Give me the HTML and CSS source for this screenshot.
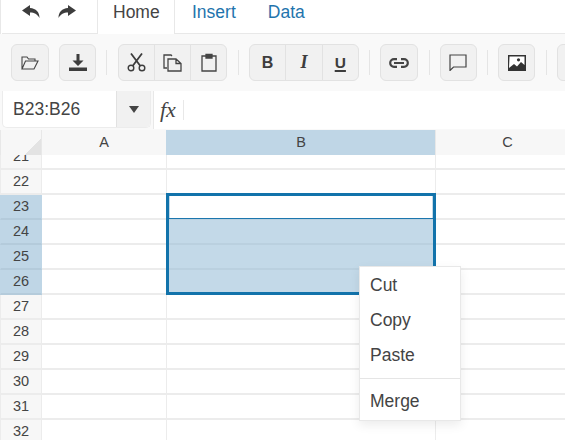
FILE: index.html
```html
<!DOCTYPE html>
<html>
	<head>
		<meta charset="utf-8">
		<title>Spreadsheet</title>
		<link rel="stylesheet" href="styles.css">
	</head>
	<body>
		<div class="tabs">
			<div class="history">
				<svg width="18" height="13" viewBox="0 0 18 13"><path d="M8 0 0 5.500 8 11V7.500c4.500 0 7 1.500 9.500 5.500 0-6-3.500-9.500-9.500-10z"/></svg>
				<svg width="18" height="13" viewBox="0 0 18 13"><path d="M10 0l8 5.500-8 5.500V7.500c-4.500 0-7 1.500-9.500 5.500 0-6 3.500-9.500 9.500-10z"/></svg>
			</div>
			<div class="tab active">Home</div>
			<div class="tab">Insert</div>
			<div class="tab">Data</div>
		</div>

		<div class="ribbon">
			<div class="btn wide"><svg width="18" height="14" viewBox="0 0 18 14" fill="none" stroke="#444" stroke-width="1.100"><path d="M1 13V1h5l1.500 2H14v2M1 13h12l4-8H4.500z"/></svg></div>
			<div class="btn next"><svg width="18" height="18" viewBox="0 0 18 18" fill="#3d3d3d"><path d="M7.500 0h3v6.500h4L9 12 3.500 6.500h4z"/><path d="M0 13.500h18V17H0z"/></svg></div>
			<i class="sep"></i>
			<div class="group">
				<div class="btn"><svg width="19" height="19" viewBox="0 0 19 19" fill="none" stroke="#3d3d3d" stroke-width="1.400"><circle cx="4" cy="15" r="2.800"/><circle cx="15" cy="15" r="2.800"/><path d="M5.800 12.800 15 0.500M13.200 12.800 4 0.500" stroke-width="1.800"/></svg></div>
				<div class="btn"><svg width="19" height="18" viewBox="0 0 19 18" fill="none" stroke="#444" stroke-width="1.300"><path d="M4 14H1V1h7l1 1"/><path d="M5 5h8l5 4.500V17H5zM13 5v4.500h5"/></svg></div>
				<div class="btn"><svg width="16" height="19" viewBox="0 0 16 19" fill="none" stroke="#444" stroke-width="1.300"><path d="M5 3H1v15h14V3h-4"/><path d="M5 1.500h6V5H5z" fill="#444"/></svg></div>
			</div>
			<i class="sep"></i>
			<div class="group">
				<div class="btn letter bold">B</div>
				<div class="btn letter italic">I</div>
				<div class="btn letter under">U</div>
			</div>
			<i class="sep"></i>
			<div class="btn wide"><svg width="20" height="10" viewBox="0 0 20 10" fill="none" stroke="#444" stroke-width="2.200"><path d="M8 1.200H5a3.800 3.800 0 0 0 0 7.600h3M12 1.200h3a3.800 3.800 0 0 1 0 7.600h-3M5 5h10"/></svg></div>
			<i class="sep"></i>
			<div class="btn"><svg width="18" height="17" viewBox="0 0 18 17" fill="none" stroke="#444" stroke-width="1.200"><path d="M1 1h16v12H4.500L1 16.500z"/></svg></div>
			<i class="sep"></i>
			<div class="btn"><svg width="18" height="16" viewBox="0 0 18 16"><path fill="#333" d="M0 0h18v16H0z"/><path fill="#fff" d="M1.500 1.500h15V10l-3.500-3-4 4.500-3-2.500-5 4z"/><circle fill="#333" cx="10.500" cy="4.800" r="1.600"/></svg></div>
			<i class="sep"></i>
			<div class="btn"></div>
		</div>

		<div class="formula">
			<div class="name-box">
				<div class="name">B23:B26</div>
				<div class="arrow"><b></b></div>
			</div>
			<div class="input">
				<div class="fx">fx</div>
			</div>
		</div>

		<div class="sheet">
			<div class="head">
				<div class="corner"></div>
				<div class="col">A</div>
				<div class="col picked">B</div>
				<div class="col">C</div>
			</div>
			<div class="body">
				<div class="rows" id="rows"></div>
				<div class="selection"><div class="active-cell"></div></div>
			</div>
			<ul class="menu">
				<li>Cut</li>
				<li>Copy</li>
				<li>Paste</li>
				<li class="line"></li>
				<li>Merge</li>
			</ul>
		</div>

		<script src="sheet.js"></script>
	</body>
</html>
```

FILE: styles.css
```css
* {
	margin: 0;
	padding: 0;
	box-sizing: border-box;
}

body {
	width: 565px;
	height: 440px;
	overflow: hidden;
	background: #fff;
	font-family: "Liberation Sans", Arial, sans-serif;
	color: #444;
}

/* tabs */
.tabs {
	display: flex;
	height: 34px;
	padding-left: 1px;
	border-left: 1px solid #e8e8e8;
}

.history {
	width: 95px;
	display: flex;
	align-items: center;
	gap: 18px;
	padding: 0 0 11px 20px;
	fill: #3d3d3d;
	border-bottom: 1px solid #e8e8e8;
}

.tab {
	height: 34px;
	padding: 0 16px;
	font-size: 17.500px;
	line-height: 24px;
	color: #1f74ad;
	border-bottom: 1px solid #e8e8e8;
}

.tab.active {
	width: 78px;
	padding: 0 15px;
	color: #444;
	border-left: 1px solid #e8e8e8;
	border-right: 1px solid #e8e8e8;
	border-bottom: 0;
}

.tab.active + .tab {
	padding-left: 17px;
}

.tabs::after {
	content: "";
	flex: 1;
	border-bottom: 1px solid #e8e8e8;
}

/* toolbar */
.ribbon {
	display: flex;
	align-items: center;
	height: 57px;
	padding-left: 11px;
	background: #f9f9f9;
	white-space: nowrap;
	overflow: hidden;
}

.btn {
	flex: none;
	width: 37px;
	height: 37px;
	display: flex;
	align-items: center;
	justify-content: center;
	background: #f1f1f1;
	border: 1px solid #e2e2e2;
	border-radius: 6px;
}

.btn.wide {
	width: 38px;
}

.btn.next {
	margin-left: 10px;
}

.sep {
	flex: none;
	width: 1px;
	height: 25px;
	margin: 0 10.250px;
	background: #e5e5e5;
}

.group {
	display: flex;
	flex: none;
}

.group .btn {
	width: 37.330px;
	border-radius: 0;
	margin-left: -1px;
}

.group .btn:first-child {
	margin-left: 0;
	border-radius: 6px 0 0 6px;
}

.group .btn:last-child {
	border-radius: 0 6px 6px 0;
}

.letter {
	font-size: 16px;
	color: #3d3d3d;
}

.bold {
	font-weight: bold;
}

.italic {
	font-style: italic;
	font-weight: bold;
	font-family: "Liberation Serif", serif;
	font-size: 18px;
}

.under {
	font-weight: bold;
	font-size: 15.500px;
	text-decoration: underline;
	text-decoration-thickness: 2px;
	text-underline-offset: 2px;
}

/* formula bar */
.formula {
	display: flex;
	height: 39px;
	background: #f9f9f9;
}

.name-box {
	display: flex;
	flex: none;
	width: 149px;
	height: 37px;
	margin-left: 2px;
	background: #fff;
	border: 1px solid #ececec;
	border-top: 0;
	border-radius: 0 0 5px 5px;
}

.name {
	width: 113px;
	padding-left: 10px;
	font-size: 17.500px;
	line-height: 37px;
}

.arrow {
	flex: 1;
	display: flex;
	align-items: center;
	justify-content: center;
	background: #f1f1f1;
	border-left: 1px solid #e2e2e2;
	border-radius: 0 0 4px 0;
}

.arrow b {
	border-top: 7px solid #444;
	border-left: 5px solid transparent;
	border-right: 5px solid transparent;
}

.input {
	flex: 1;
	height: 38px;
	margin-left: 2px;
	padding-top: 9px;
	background: #fff;
	border-left: 1px solid #e8e8e8;
}

.fx {
	width: 30px;
	height: 20px;
	padding-left: 6px;
	font-family: "Liberation Serif", serif;
	font-style: italic;
	font-size: 22px;
	line-height: 20px;
	border-right: 1px solid #e8e8e8;
}

/* sheet */
.sheet {
	position: relative;
	height: 310px;
	overflow: hidden;
}

.head {
	display: grid;
	grid-template-columns: 41px 125px 269px 144px;
	height: 25px;
	position: relative;
	z-index: 1;
}

.corner {
	background-color: #f7f7f7;
	background-image: linear-gradient(135deg, #f7f7f7 50%, #e3e3e3 50%);
	background-size: 16px 16px;
	background-position: right bottom;
	background-repeat: no-repeat;
	border-left: 1px solid #e8e8e8;
}

.col {
	background: #f7f7f7;
	font-size: 14.500px;
	line-height: 25px;
	text-align: center;
	border-left: 1px solid #e8e8e8;
}

.col.picked {
	background: #bfd6e6;
	border-color: #bfd6e6;
}

.body {
	position: relative;
	height: 285px;
	overflow: hidden;
}

.rows {
	margin-top: -10px;
}

.row {
	display: grid;
	grid-template-columns: 42px 125px 269px 130px;
	height: 25px;
}

.row div {
	border-bottom: 2px solid #ececec;
	border-right: 1px solid #ececec;
}

.row .num {
	background: #f7f7f7;
	font-size: 14.500px;
	line-height: 23px;
	text-align: center;
	border-left: 1px solid #ececec;
}

.row.picked .num {
	background: #bfd6e6;
	border-color: #b4cbdb;
	border-left-color: #bfd6e6;
	border-right-color: #bfd6e6;
}

.row.picked .fill {
	background: #c3d9e8;
	border-bottom-color: #bad0df;
}

/* selection box */
.selection {
	position: absolute;
	left: 166px;
	top: 38px;
	width: 270px;
	height: 102px;
	border: 3px solid #1273ab;
}

.active-cell {
	height: 22px;
	background: #fff;
	border-left: 1px solid #c3d9e8;
	border-right: 1px solid #c3d9e8;
	box-shadow: 0 1px 0 #1b76ae;
}

/* context menu */
.menu {
	position: absolute;
	left: 359px;
	top: 136px;
	width: 102px;
	height: 155px;
	padding-top: 1px;
	list-style: none;
	background: #fff;
	border: 1px solid #e8e8e8;
	box-shadow: 0 4px 10px rgba(0, 0, 0, 0.08);
	font-size: 17.500px;
}

.menu li {
	height: 35px;
	padding-left: 10px;
	line-height: 35px;
}

.menu .line {
	height: 1px;
	margin: 5px 0;
	padding: 0;
	background: #e5e5e5;
}
```

FILE: sheet.js
```js
var rows = document.getElementById("rows");

for (var n = 21; n <= 33; n++) {
	var picked = n >= 23 && n <= 26;
	var row = document.createElement("div");
	row.className = picked ? "row picked" : "row";
	row.innerHTML = '<div class="num">' + n + '</div><div></div><div class="' + (picked ? "fill" : "") + '"></div><div></div>';
	rows.appendChild(row);
}
```
